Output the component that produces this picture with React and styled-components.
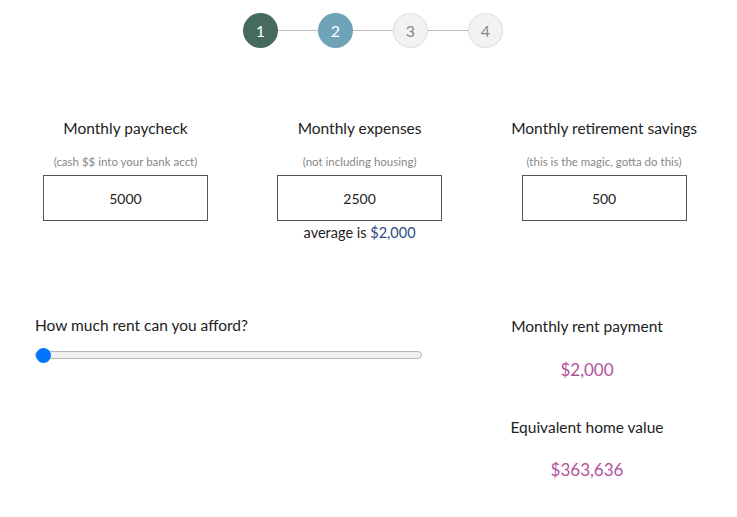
import { Fragment, useState } from "react";
import styled, { createGlobalStyle } from "styled-components";

const GlobalStyle = createGlobalStyle`
  body {
    margin: 0;
    background: #fff;
    font-family: "Lato", "Noto Sans", sans-serif;
    color: #222;
  }
`;

const Page = styled.div`
  width: 737px;
  display: flex;
  flex-direction: column;
`;

const Stepper = styled.div`
  display: flex;
  align-items: center;
  justify-content: center;
  padding: 13px 0 0 9px;
`;

const Step = styled.div`
  width: 35px;
  height: 35px;
  box-sizing: border-box;
  border-radius: 50%;
  display: flex;
  align-items: center;
  justify-content: center;
  font-size: 16px;
  background: ${(p) => p.$bg};
  color: ${(p) => (p.$active ? "#fff" : "#888")};
  border: ${(p) => (p.$active ? "none" : "1px solid #dcdcdc")};
`;

const Line = styled.div`
  width: 40px;
  height: 1px;
  background: #bdbdbd;
`;

const Inputs = styled.div`
  display: flex;
  justify-content: space-between;
  align-items: flex-start;
  padding: 0 40px 0 43px;
  margin-top: 70px;
`;

const Field = styled.div`
  display: flex;
  flex-direction: column;
  align-items: center;
  min-width: 165px;
`;

const Title = styled.div`
  font-size: 15.5px;
  line-height: 20px;
  white-space: nowrap;
`;

const Hint = styled.div`
  font-size: 11.5px;
  line-height: 16px;
  color: #888;
  margin-top: 16px;
  white-space: nowrap;
`;

const Box = styled.input`
  margin-top: 5px;
  width: 165px;
  height: 46px;
  box-sizing: border-box;
  border: 1px solid #555;
  border-radius: 0;
  text-align: center;
  font-family: inherit;
  font-size: 14px;
  color: #222;
  outline: none;
  padding: 0;
`;

const Note = styled.div`
  margin-top: 3px;
  font-size: 14.5px;
  line-height: 18px;
  span {
    color: #2d4b86;
  }
`;

const Bottom = styled.div`
  display: flex;
  justify-content: space-between;
  align-items: flex-start;
  padding: 0 50px 0 35px;
  margin-top: 73px;
`;

const Afford = styled.div`
  width: 387px;
  display: flex;
  flex-direction: column;
`;

const Range = styled.input`
  -webkit-appearance: none;
  appearance: none;
  margin: 12px 0 0;
  width: 387px;
  height: 16px;
  background: transparent;
  &::-webkit-slider-runnable-track {
    height: 8px;
    border-radius: 4px;
    background: #efefef;
    border: 1px solid #b5b5b5;
    box-sizing: border-box;
  }
  &::-webkit-slider-thumb {
    -webkit-appearance: none;
    width: 15px;
    height: 15px;
    border-radius: 50%;
    background: #0075ff;
    margin-top: -4.5px;
  }
`;

const Results = styled.div`
  width: 200px;
  display: flex;
  flex-direction: column;
  align-items: center;
  padding-top: 1px;
`;

const ResultLabel = styled.div`
  font-size: 15.5px;
  line-height: 20px;
  white-space: nowrap;
  margin-top: ${(p) => p.$gap || 0}px;
`;

const ResultValue = styled.div`
  font-size: 17px;
  line-height: 22px;
  color: #b2529c;
  margin-top: ${(p) => p.$gap}px;
`;

const steps = [
  { n: 1, bg: "#476a5f", active: true },
  { n: 2, bg: "#6fa3b8", active: true },
  { n: 3, bg: "#f2f2f2" },
  { n: 4, bg: "#f2f2f2" },
];

export default function App() {
  const [pay, setPay] = useState("5000");
  const [exp, setExp] = useState("2500");
  const [save, setSave] = useState("500");
  const [rent, setRent] = useState(0);

  return (
    <Page>
      <GlobalStyle />
      <Stepper>
        {steps.map((s, i) => (
          <Fragment key={s.n}>
            {i > 0 && <Line />}
            <Step $bg={s.bg} $active={s.active}>
              {s.n}
            </Step>
          </Fragment>
        ))}
      </Stepper>

      <Inputs>
        <Field>
          <Title>Monthly paycheck</Title>
          <Hint>(cash $$ into your bank acct)</Hint>
          <Box value={pay} onChange={(e) => setPay(e.target.value)} />
        </Field>
        <Field>
          <Title>Monthly expenses</Title>
          <Hint>(not including housing)</Hint>
          <Box value={exp} onChange={(e) => setExp(e.target.value)} />
          <Note>
            average is <span>$2,000</span>
          </Note>
        </Field>
        <Field>
          <Title>Monthly retirement savings</Title>
          <Hint>(this is the magic, gotta do this)</Hint>
          <Box value={save} onChange={(e) => setSave(e.target.value)} />
        </Field>
      </Inputs>

      <Bottom>
        <Afford>
          <Title>How much rent can you afford?</Title>
          <Range
            type="range"
            min="0"
            max="100"
            value={rent}
            onChange={(e) => setRent(e.target.value)}
          />
        </Afford>
        <Results>
          <ResultLabel>Monthly rent payment</ResultLabel>
          <ResultValue $gap={23}>$2,000</ResultValue>
          <ResultLabel $gap={36}>Equivalent home value</ResultLabel>
          <ResultValue $gap={22}>$363,636</ResultValue>
        </Results>
      </Bottom>
    </Page>
  );
}
